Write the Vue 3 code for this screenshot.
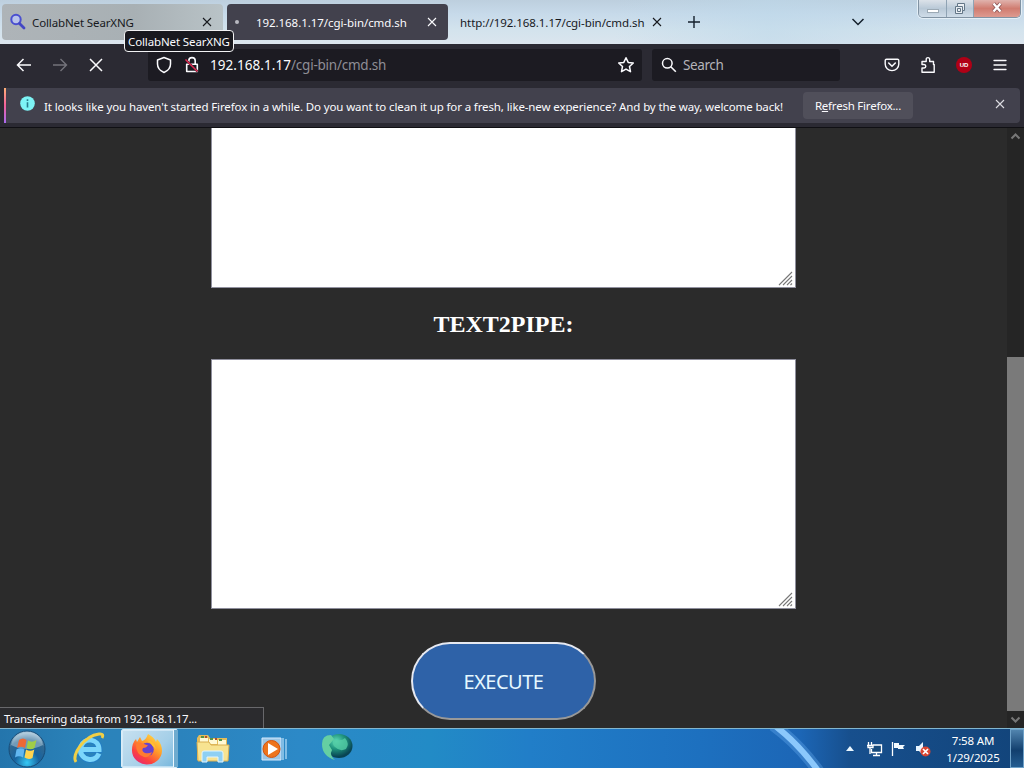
<script setup>
const tabs = [
  { title: 'CollabNet SearXNG', kind: 'search' },
  { title: '192.168.1.17/cgi-bin/cmd.sh', kind: 'active' },
  { title: 'http://192.168.1.17/cgi-bin/cmd.sh', kind: 'plain' },
]
</script>

<template>
  <div class="screen">
    <header class="tabstrip">
      <div v-for="tab in tabs" :key="tab.title" class="tab" :class="tab.kind">
        <svg v-if="tab.kind === 'search'" class="favicon" width="18" height="18" viewBox="0 0 18 18">
          <circle cx="7" cy="6.500" r="4.700" fill="#b9c3ea" stroke="#4a4fd0" stroke-width="2" />
          <path d="M10.500 10.500L15 15" stroke="#4347c4" stroke-width="2.800" stroke-linecap="round" />
        </svg>
        <i v-if="tab.kind === 'active'" class="dot"></i>
        <span class="tab-title">{{ tab.title }}</span>
        <svg class="close" width="10" height="10" viewBox="0 0 10 10">
          <path d="M1 1L9 9M9 1L1 9" stroke="currentColor" stroke-width="1.100" />
        </svg>
      </div>
      <svg class="plus" width="14" height="14" viewBox="0 0 14 14">
        <path d="M7 1V13M1 7H13" stroke="#15202c" stroke-width="1.400" />
      </svg>
      <svg class="all-tabs" width="14" height="10" viewBox="0 0 14 10">
        <path d="M1.500 2L7 7.500L12.500 2" fill="none" stroke="#15202c" stroke-width="1.500" />
      </svg>
      <div class="winbtns">
        <span class="wb min"><i></i></span>
        <span class="wb max">
          <svg width="14" height="14" viewBox="0 0 14 14">
            <path d="M4.500 1.500h7v7h-2v3h-7v-7h2zM4.500 4.500h5v4M4.500 6.500h3v3h-3z" fill="#fff" fill-opacity=".65" stroke="#637687" stroke-width="1" />
          </svg>
        </span>
        <span class="wb x">
          <svg width="14" height="11" viewBox="0 0 14 11">
            <path d="M3.500 1.500L10.500 9.500M10.500 1.500L3.500 9.500" stroke="#8b5555" stroke-width="4" />
            <path d="M3.500 1.500L10.500 9.500M10.500 1.500L3.500 9.500" stroke="#fff" stroke-width="2.400" />
          </svg>
        </span>
      </div>
      <div class="tooltip"><span>CollabNet SearXNG</span></div>
    </header>

    <nav class="toolbar">
      <svg class="back" width="16" height="16" viewBox="0 0 16 16">
        <path d="M15 8H1.500M7.500 2L1.500 8L7.500 14" fill="none" stroke="#fbfbfe" stroke-width="1.500" />
      </svg>
      <svg class="forward" width="16" height="16" viewBox="0 0 16 16">
        <path d="M1 8H14.500M8.500 2L14.500 8L8.500 14" fill="none" stroke="#74737b" stroke-width="1.400" />
      </svg>
      <svg class="stop" width="14" height="14" viewBox="0 0 14 14">
        <path d="M1 1L13 13M13 1L1 13" stroke="#fbfbfe" stroke-width="1.500" />
      </svg>
      <div class="urlbar">
        <svg width="16" height="18" viewBox="0 0 16 18">
          <path d="M8 1.500L14.500 4V8C14.500 12 12.200 14.700 8 16.500C3.800 14.700 1.500 12 1.500 8V4Z" fill="none" stroke="#fbfbfe" stroke-width="1.500" stroke-linejoin="round" />
        </svg>
        <svg class="lock" width="16" height="18" viewBox="0 0 16 18">
          <path d="M4.800 8V4.700C4.800 .6 11.200 .6 11.200 4.700V8M2.700 8.200H13.300V15.500H2.700Z" fill="none" stroke="#fbfbfe" stroke-width="1.600" stroke-linejoin="round" />
          <path d="M1.500 3.500L13.500 15.500" stroke="#25232b" stroke-width="2.400" />
          <path d="M1.500 3.500L13.500 15.500" stroke="#e22850" stroke-width="1.500" />
        </svg>
        <span class="host">192.168.1.17</span><span class="path">/cgi-bin/cmd.sh</span>
        <svg class="star" width="18" height="18" viewBox="0 0 18 18">
          <path d="M9 1.700L11.200 6.400L16.300 7L12.500 10.500L13.500 15.700L9 13.100L4.500 15.700L5.500 10.500L1.700 7L6.800 6.400Z" fill="none" stroke="#fbfbfe" stroke-width="1.500" stroke-linejoin="round" />
        </svg>
      </div>
      <div class="searchbar">
        <svg width="16" height="16" viewBox="0 0 16 16">
          <circle cx="6.300" cy="6.300" r="4.800" fill="none" stroke="#fbfbfe" stroke-width="1.500" />
          <path d="M9.800 9.800L14.800 14.800" stroke="#fbfbfe" stroke-width="1.600" />
        </svg>
        <span>Search</span>
      </div>
      <div class="tools">
        <svg width="16" height="16" viewBox="0 0 16 16">
          <path d="M2.500 2.200H13.500Q14.800 2.200 14.800 3.500V7C14.800 11 11.800 13.600 8 13.600S1.200 11 1.200 7V3.500Q1.200 2.200 2.500 2.200Z" fill="none" stroke="#fbfbfe" stroke-width="1.400" />
          <path d="M4.700 6L8 9.200L11.300 6" fill="none" stroke="#fbfbfe" stroke-width="1.600" stroke-linecap="round" />
        </svg>
        <svg width="16" height="18" viewBox="0 0 16 18">
          <path d="M2 16.200V12H4Q5.800 11.700 5.800 10.200T4 8.500H2V5.500H6.200V3.500C6.200 1 9.700 1 9.700 3.500V5.500H13.500V8.500H14.200V16.200Z" fill="none" stroke="#fbfbfe" stroke-width="1.400" stroke-linejoin="round" />
        </svg>
        <span class="ublock"><span>UD</span></span>
        <svg class="menu" width="14" height="12" viewBox="0 0 14 12">
          <path d="M1 1.500H13M1 6H13M1 10.500H13" stroke="#fbfbfe" stroke-width="1.300" stroke-linecap="round" />
        </svg>
      </div>
    </nav>

    <section class="notice-row">
      <div class="notice">
        <span class="info">
          <svg width="15" height="15" viewBox="0 0 15 15">
            <circle cx="7.500" cy="7.500" r="7.300" fill="#7df3f5" />
            <path d="M7.500 6.300V11.500M7.500 3.300V5" stroke="#277c8c" stroke-width="1.600" />
          </svg>
        </span>
        <span class="message">It looks like you haven't started Firefox in a while. Do you want to clean it up for a fresh, like-new experience? And by the way, welcome back!</span>
        <button class="refresh"><span>R<u>e</u>fresh Firefox...</span></button>
        <svg class="dismiss" width="10" height="10" viewBox="0 0 10 10">
          <path d="M1 1L9 9M9 1L1 9" stroke="#dedde3" stroke-width="1.100" />
        </svg>
      </div>
    </section>

    <div class="viewport">
      <main class="page">
        <div class="area first"><svg class="grip" width="16" height="16" viewBox="0 0 16 16"><path d="M1 15L14 2M5 15L14 6M9 15L14 10M12.500 15L14 13.500" stroke="#777" stroke-width="1.100" /></svg></div>
        <h2>TEXT2PIPE:</h2>
        <div class="area second"><svg class="grip" width="16" height="16" viewBox="0 0 16 16"><path d="M1 15L14 2M5 15L14 6M9 15L14 10M12.500 15L14 13.500" stroke="#777" stroke-width="1.100" /></svg></div>
        <button class="execute"><span>EXECUTE</span></button>
      </main>
      <aside class="scrollbar">
        <svg width="17" height="17" viewBox="0 0 17 17"><path d="M4.500 10.500L8.500 6.500L12.500 10.500" fill="none" stroke="#777" stroke-width="2" /></svg>
        <div class="thumb"></div>
        <svg width="17" height="17" viewBox="0 0 17 17"><path d="M4.500 6.500L8.500 10.500L12.500 6.500" fill="none" stroke="#777" stroke-width="2" /></svg>
      </aside>
      <div class="status"><span>Transferring data from 192.168.1.17...</span></div>
    </div>

    <footer class="taskbar">
      <svg class="streak" width="80" height="39" viewBox="0 0 80 39">
        <path d="M3 -4Q29 15 49 43" fill="none" stroke="#69b0f2" stroke-opacity=".35" stroke-width="12" />
        <path d="M4 -4Q29 15 49 43" fill="none" stroke="#8bc8fc" stroke-width="6" />
      </svg>
      <div class="launch orb">
        <svg width="38" height="38" viewBox="0 0 38 38">
          <defs>
            <radialGradient id="orb" cx=".5" cy=".88" r=".85"><stop offset="0" stop-color="#35c9f5" /><stop offset=".4" stop-color="#17639f" /><stop offset=".75" stop-color="#316890" /><stop offset="1" stop-color="#a9c6d9" /></radialGradient>
          </defs>
          <circle cx="19" cy="19" r="18" fill="url(#orb)" stroke="#174c78" />
          <path d="M3 15Q6 3 19 2.500T35 15Q19 23 3 15Z" fill="#d6e8f2" opacity=".4" />
          <path d="M11 10Q15 7 18.500 10L17 18Q13 15.500 9 18Z" fill="#ee6835" />
          <path d="M20 10.500Q24 13 28.500 10L26.500 18Q22.500 20.500 18.500 18Z" fill="#a0cd48" />
          <path d="M8.500 19.500Q12.500 17 16.500 19.500L15 27.500Q11 25 7 27.500Z" fill="#62b7f1" />
          <path d="M18 19.500Q22 22 26.300 19.500L24.500 28Q20.500 30 16.500 27.500Z" fill="#ffd450" />
        </svg>
      </div>
      <div class="launch ie">
        <svg width="34" height="34" viewBox="0 0 34 34">
          <path d="M27 22.500Q24 29 17.500 28.500C10 27.500 7 21 9 15.500C12 6 27 7 27 18.500H10" fill="none" stroke="#247fc5" stroke-width="6.800" />
          <path d="M27 22.500Q24 29 17.500 28.500C10 27.500 7 21 9 15.500C12 6 27 7 27 18.500H10" fill="none" stroke="#7bd6fb" stroke-width="5" />
          <path d="M4 31C-1 24 12 5 27 3C31 2.500 31.500 4.500 30 7" fill="none" stroke="#f1cf46" stroke-width="3" />
        </svg>
      </div>
      <div class="launch firefox">
        <svg width="32" height="32" viewBox="0 0 32 32">
          <defs><linearGradient id="fox" x1=".9" y1="0" x2=".2" y2="1"><stop offset="0" stop-color="#ffe64b" /><stop offset=".42" stop-color="#ff9b29" /><stop offset=".75" stop-color="#fc423f" /><stop offset="1" stop-color="#e52578" /></linearGradient></defs>
          <path d="M17 1Q23 4 25 9L26 6Q31 11 31 18A15 14 0 0 1 1 17Q1 10 5 6L6 9L9 4L11 8Q15 7 17 1Z" fill="url(#fox)" />
          <circle cx="16" cy="16.500" r="6.800" fill="#6642ce" />
          <path d="M5 11Q9 8 13 11L17 12.500Q15 15 12 15Q10 18 14 20Q18 21 21 19Q19 25 13 24Q5 22 5 11Z" fill="#ff7b30" />
          <path d="M16 7.500Q23 7 25 16L21.500 13Q20 9.500 16 7.500Z" fill="#ffbf33" />
        </svg>
      </div>
      <div class="launch folder">
        <svg width="34" height="30" viewBox="0 0 34 30">
          <path d="M1 4L3 1H12L14 4H31V26H1Z" fill="#e4bc5b" />
          <path d="M4 4H12V9H4ZM13 5H21V10H13ZM22 6H30V11H22Z" fill="#fff9d4" />
          <path d="M5 3H8M14 5H17M23 6H26" stroke="#579345" stroke-width="2" />
          <path d="M9 3H11M19 5H21" stroke="#b24d32" stroke-width="2" />
          <path d="M1 8H13L15 11H33L32 27H2Z" fill="#f7e391" stroke="#d9af52" />
          <path d="M6 28V19Q6 17 8 17H25Q27 17 27 19V28H22V23H11V28Z" fill="#8ed0f3" stroke="#e0f5ff" />
        </svg>
      </div>
      <div class="launch media">
        <svg width="26" height="24" viewBox="0 0 26 24">
          <path d="M1 1H20V23H1Z" fill="#9cc6e5" stroke="#d4eaff" />
          <path d="M22 1V23M25 2V22" stroke="#a5d4f3" stroke-width="1.400" />
          <circle cx="10.500" cy="12" r="8.500" fill="#ed741d" stroke="#d4540f" />
          <path d="M7 6L17 12L7 18Z" fill="#fff" />
        </svg>
      </div>
      <div class="launch webroot">
        <svg width="32" height="28" viewBox="0 0 32 28">
          <defs><radialGradient id="globe" cx=".4" cy=".3" r=".65"><stop offset="0" stop-color="#5fdcb8" /><stop offset=".5" stop-color="#1f937c" /><stop offset="1" stop-color="#084453" /></radialGradient></defs>
          <ellipse cx="18" cy="13" rx="13.500" ry="12" fill="url(#globe)" />
          <path d="M10 2Q1 2 1 11Q1 23 14 27Q8 22 11 17L8 12L13 6Z" fill="#65cfa2" />
          <path d="M12 6Q20 9 24 5Q29 11 25 16Q19 19 14 14Q11 12 12 6Z" fill="#55cda5" opacity=".8" />
        </svg>
      </div>
      <div class="tray">
        <svg class="up" width="8" height="5" viewBox="0 0 8 5"><path d="M0 5L4 0L8 5Z" fill="#eaf7ff" /></svg>
        <svg class="network" width="16" height="16" viewBox="0 0 16 16">
          <path d="M5.500 4H14.500V11.500H4.500V8" fill="#174a7c" stroke="#fff" stroke-width="1.300" />
          <path d="M9.500 12V14.500M6 14.500H13M1.500 1V4M4.500 1V4M0 4.500H6V6.500H1V4.500M3 7V13" fill="none" stroke="#fff" stroke-width="1.300" />
        </svg>
        <svg class="flag" width="16" height="16" viewBox="0 0 16 16">
          <path d="M1.500 1V15" stroke="#fff" stroke-width="1.300" />
          <path d="M3 2H8V4H14L12 6L13 8H7V7H3Z" fill="#f4fbff" />
        </svg>
        <svg class="volume" width="16" height="16" viewBox="0 0 16 16">
          <path d="M1 5H4L8 1V14L4 10H1Z" fill="#e9f5ff" />
          <circle cx="10.500" cy="10.500" r="5" fill="#d94531" />
          <path d="M8 8L13 13M13 8L8 13" stroke="#fff" stroke-width="1.700" />
        </svg>
        <div class="clock"><span class="time">7:58 AM</span><span class="date">1/29/2025</span></div>
        <div class="show-desktop"></div>
      </div>
    </footer>
  </div>
</template>

<style>
body { margin: 0; background: #2b2b2b; }
</style>

<style scoped>
* { box-sizing: border-box; }
svg { display: block; flex: none; }
span { white-space: nowrap; }
button { padding: 0; font: inherit; }
.screen { width: 1024px; height: 768px; overflow: hidden; display: flex; flex-direction: column; font-family: "Noto Sans", "Open Sans", sans-serif; font-size: 11.5px; }

.tabstrip { position: relative; flex: none; height: 44px; display: flex; align-items: flex-start; padding-left: 2px; background: linear-gradient(90deg, #fff0 60%, #bcd8ea88 75%, #fff0 95%), linear-gradient(180deg, #bdcfde 0, #c7daea 14px, #d3e3ed 30px, #dbe5ee 44px); }
.tab { display: flex; align-items: center; height: 36px; margin-top: 4px; border-radius: 4px; color: #17191d; }
.tab-title { flex: 1; line-height: 18px; padding-top: 1px; }
.close { flex: none; }
.tab.search { width: 221px; padding: 0 11px 0 7px; background: linear-gradient(90deg, #aeb4b8, #a8b0b4 60%, #b9c3c7); }
.search .favicon { margin-right: 5px; }
.search .tab-title { letter-spacing: -.12px; }
.tab.active { width: 221px; margin-left: 4px; padding: 0 11px 0 8px; background: #42414d; color: #fbfbfe; }
.dot { width: 4px; height: 4px; margin-right: 17px; border-radius: 50%; background: #b9b9c1; }
.active .tab-title { letter-spacing: -.06px; }
.tab.plain { width: 207px; margin-left: 11px; padding: 0 4px 0 1px; }
.plain .tab-title { letter-spacing: -.06px; }
.plus { margin: 15px 0 0 21px; }
.all-tabs { margin: 17px 0 0 150px; }
.winbtns { display: flex; height: 18px; width: 103px; margin-left: auto; margin-right: 3px; border: 1px solid #8193a3; border-top: 0; border-radius: 0 0 5px 5px; box-shadow: 0 0 0 1px #e4eff7; overflow: hidden; }
.wb { display: flex; justify-content: center; align-items: center; background: linear-gradient(#dce2e9, #b9c9d7 50%, #cfdce8); border-right: 1px solid #8fa3b4; }
.min { width: 28px; }
.min i { width: 12px; height: 4px; margin-top: 5px; border: 1px solid #9caab5; background: #fff; }
.max { width: 27px; }
.x { flex: 1; padding-bottom: 2px; border: 0; background: linear-gradient(#e0b3ad, #d07c70 50%, #dd9a90); }
.tooltip { position: absolute; z-index: 3; left: 124px; top: 30px; width: 110px; height: 22px; padding-left: 3px; border: 1px solid #f2f2f4; border-radius: 4px; background: #19191f; color: #fbfbfe; line-height: 21px; letter-spacing: -.12px; }

.toolbar { flex: none; height: 42px; display: flex; align-items: center; background: #2b2a33; padding-left: 16px; }
.forward { margin-left: 20px; }
.stop { margin-left: 21px; }
.urlbar { display: flex; align-items: center; width: 494px; height: 32px; margin-left: 45px; padding-left: 8px; background: #1c1b22; border-radius: 3px; font-size: 13.5px; }
.lock { margin: 0 10px 0 12px; }
.host { color: #fbfbfe; letter-spacing: .06px; }
.path { color: #8f8e96; letter-spacing: -.24px; }
.star { margin: 0 7px 0 auto; }
.searchbar { display: flex; align-items: center; width: 188px; height: 32px; margin-left: 10px; padding-left: 9px; gap: 6px; background: #1c1b22; border-radius: 3px; color: #b5b4ba; font-size: 13.5px; letter-spacing: -.4px; }
.tools { display: flex; align-items: center; margin-left: 44px; gap: 20px; }
.menu { margin-left: 1px; }
.ublock { display: flex; align-items: center; justify-content: center; width: 16px; height: 16px; border-radius: 50%; background: #b00016; color: #fff; font: bold 6px "Liberation Sans", sans-serif; }

.notice-row { flex: none; height: 42px; padding: 2px 4px 0; background: #2b2a33; border-bottom: 1px solid #101014; }
.notice { position: relative; display: flex; align-items: center; height: 35px; padding-left: 16px; border-radius: 0 4px 4px 0; background: #42414d; color: #fbfbfe; }
.notice::before { content: ""; position: absolute; left: 0; top: 0; width: 2px; height: 35px; background: linear-gradient(#ffb076, #f2609b 50%, #aa6af2); }
.info { margin: -4px 9px 0 0; }
.message { width: 740px; letter-spacing: -.117px; padding-top: 1px; }
.refresh { width: 110px; height: 27px; margin-left: 19px; border: 0; border-radius: 4px; background: #504f5a; color: #fbfbfe; letter-spacing: -.22px; }
.dismiss { margin: -3px 15px 0 auto; }

.viewport { position: relative; flex: none; height: 600px; display: flex; background: #2b2b2b; overflow: hidden; }
.page { width: 1007px; display: flex; flex-direction: column; align-items: center; }
.area { display: flex; align-items: flex-end; justify-content: flex-end; flex: none; width: 585px; background: #fff; border: 1px solid #8f8f9d; padding: 1px; }
.first { height: 160px; border-top: 0; }
.second { height: 250px; }
h2 { flex: none; margin: 21px 0 20px; height: 30px; color: #fff; font: bold 24px/30px "Liberation Serif", serif; }
.execute { flex: none; width: 185px; height: 78px; margin-top: 33px; border: 2px solid; border-color: #e6e9f1 #999 #999 #e6e9f1; border-radius: 39px; background: #2e62a8; color: #e5f8ff; font-size: 20px; line-height: 24px; letter-spacing: -.5px; padding-top: 1px; }
.scrollbar { display: flex; flex-direction: column; align-items: center; justify-content: space-between; width: 17px; background: #252525; }
.thumb { width: 17px; height: 354px; margin-top: auto; background: #7a7a7a; }
.status { position: absolute; left: 0; bottom: 0; width: 264px; height: 21px; padding-left: 4px; border-top: 1px solid #68686b; border-right: 1px solid #68686b; background: #2b2b2e; color: #fbfbfe; line-height: 22px; letter-spacing: -.28px; }

.taskbar { position: relative; flex: none; height: 40px; display: flex; align-items: center; border-top: 1px solid #82b6cf; background: linear-gradient(90deg, #2475ac 0, #2b83ba 90px, #2b83bd 180px, #2c89c7 300px, #228bc6 430px, #217ec8 530px, #1d70bf 700px, #1c66b6 800px, #174f8d 850px, #12447a 1024px); }
.streak { position: absolute; left: 770px; top: 0; }
.launch { display: flex; align-items: center; justify-content: center; height: 39px; }
.orb { width: 38px; margin-left: 8px; }
.ie { width: 34px; margin-left: 26px; padding-bottom: 2px; }
.firefox { width: 57px; height: 39px; margin-left: 15px; border: 1px solid #d9edf8; border-radius: 2px; background: linear-gradient(135deg, #c8e1f0, #a5cfe8 60%, #73b5dc); box-shadow: inset 0 0 0 1px #e3f2fb99; padding-right: 5px; position: relative; }
.firefox::after { content: ""; position: absolute; right: -1px; top: 0; width: 4px; height: 37px; border-left: 1px solid #edf8ff; background: #6eabcf; }
.folder { width: 34px; margin-left: 18px; }
.media { width: 26px; margin-left: 31px; }
.webroot { width: 32px; margin-left: 34px; padding-bottom: 3px; }
.tray { position: relative; display: flex; align-items: center; margin-left: auto; height: 39px; color: #fff; }
.network { margin-left: 13px; }
.flag { margin-left: 8px; }
.volume { margin-left: 8px; }
.clock { width: 64px; margin-left: 10px; display: flex; flex-direction: column; align-items: center; line-height: 17px; letter-spacing: -.15px; }
.show-desktop { width: 14px; height: 39px; margin-left: 5px; border: 1px solid #6ea1c8; background: linear-gradient(#5184ae, #123f6e 55%, #245d91); }
</style>
